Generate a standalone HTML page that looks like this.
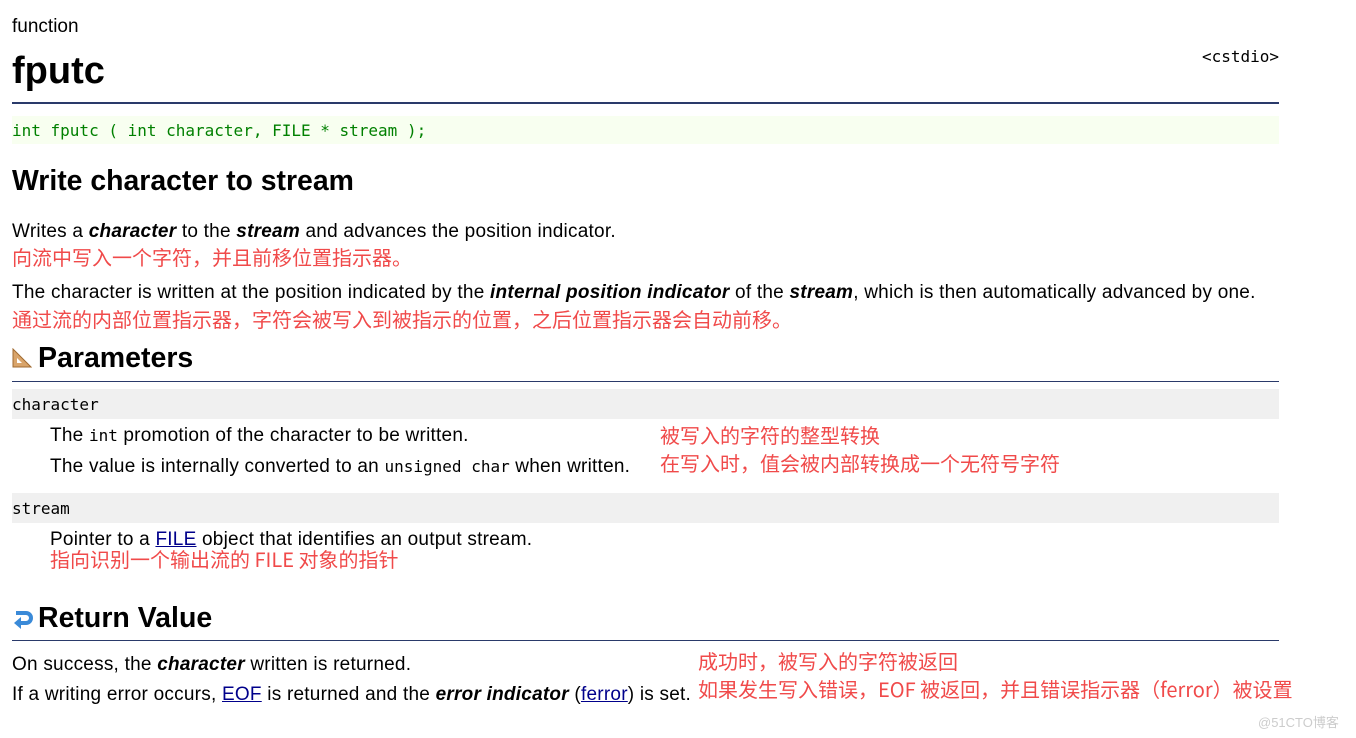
<!DOCTYPE html>
<html><head><meta charset="utf-8"><style>
body{margin:0;background:#fff;font-family:"Liberation Sans","Noto Sans CJK SC",sans-serif;color:#000;width:1356px;height:738px;overflow:hidden;position:relative}
.a{position:absolute;white-space:nowrap}
.r{color:#f04a4a;font-size:20px;font-family:"Noto Sans CJK SC","Liberation Sans",sans-serif;line-height:1.2}
.t{font-size:19px;letter-spacing:0.23px}
.m{font-family:"DejaVu Sans Mono","Liberation Mono",monospace;letter-spacing:0}
a{color:#00008b;text-decoration:underline}
.line{position:absolute;left:12px;width:1267px;height:1px}
.bar{position:absolute;left:12px;width:1267px;height:30px;background:#f0f0f0}
</style></head><body>
<div class="a" style="left:12px;top:16px;font-size:19px">function</div>
<div class="a" style="left:12px;top:50px;font-size:38px;font-weight:bold">fputc</div>
<div class="a m" style="right:77px;top:47px;font-size:16px">&lt;cstdio&gt;</div>
<div class="line" style="top:102px;height:2px;background:#2a3a6a"></div>
<div class="a" style="left:12px;top:116px;width:1267px;height:28px;background:#f8fff0"></div>
<div class="a m" style="left:12px;top:121px;font-size:16px;color:#008000">int fputc ( int character, FILE * stream );</div>
<div class="a" style="left:12px;top:165px;font-size:28.4px;font-weight:bold">Write character to stream</div>
<div class="a t" style="left:12px;top:221px">Writes a <b><i>character</i></b> to the <b><i>stream</i></b> and advances the position indicator.</div>
<div class="a r" style="left:12px;top:245px">向流中写入一个字符，并且前移位置指示器。</div>
<div class="a t" style="left:12px;top:282px">The character is written at the position indicated by the <b><i>internal position indicator</i></b> of the <b><i>stream</i></b>, which is then automatically advanced by one.</div>
<div class="a r" style="left:12px;top:307px">通过流的内部位置指示器，字符会被写入到被指示的位置，之后位置指示器会自动前移。</div>
<svg class="a" style="left:12px;top:348px" width="20" height="20"><polygon points="1,1 1,19 19,19" fill="#d9a46a" stroke="#a06a30"/><polygon points="5,10 5,15 10,15" fill="#fff"/></svg>
<div class="a" style="left:38px;top:342px;font-size:28.5px;font-weight:bold">Parameters</div>
<div class="line" style="top:381px;background:#2a3a6a"></div>
<div class="bar" style="top:389px"></div>
<div class="a m" style="left:12px;top:395px;font-size:16px">character</div>
<div class="a t" style="left:50px;top:425px">The <span class="m" style="font-size:16px">int</span> promotion of the character to be written.</div>
<div class="a r" style="left:660px;top:423px">被写入的字符的整型转换</div>
<div class="a t" style="left:50px;top:456px">The value is internally converted to an <span class="m" style="font-size:16px">unsigned char</span> when written.</div>
<div class="a r" style="left:660px;top:451px">在写入时，值会被内部转换成一个无符号字符</div>
<div class="bar" style="top:493px"></div>
<div class="a m" style="left:12px;top:499px;font-size:16px">stream</div>
<div class="a t" style="left:50px;top:529px">Pointer to a <a>FILE</a> object that identifies an output stream.</div>
<div class="a r" style="left:50px;top:547px">指向识别一个输出流的 FILE 对象的指针</div>
<svg class="a" style="left:12px;top:609px" width="22" height="20"><path d="M4,4 H14 A5,5 0 0 1 14,14 H7" fill="none" stroke="#3a8ad8" stroke-width="4"/><polygon points="2,14 9,8 9,20" fill="#3a8ad8"/></svg>
<div class="a" style="left:38px;top:602px;font-size:28.5px;font-weight:bold">Return Value</div>
<div class="line" style="top:640px;background:#2a3a6a"></div>
<div class="a t" style="left:12px;top:654px">On success, the <b><i>character</i></b> written is returned.</div>
<div class="a r" style="left:698px;top:649px">成功时，被写入的字符被返回</div>
<div class="a t" style="left:12px;top:684px">If a writing error occurs, <a>EOF</a> is returned and the <b><i>error indicator</i></b> (<a>ferror</a>) is set.</div>
<div class="a r" style="left:698px;top:677px">如果发生写入错误，EOF 被返回，并且错误指示器（ferror）被设置</div>
<div class="a" style="left:1258px;top:712px;font-size:13px;color:#ccc">@51CTO博客</div>
</body></html>
